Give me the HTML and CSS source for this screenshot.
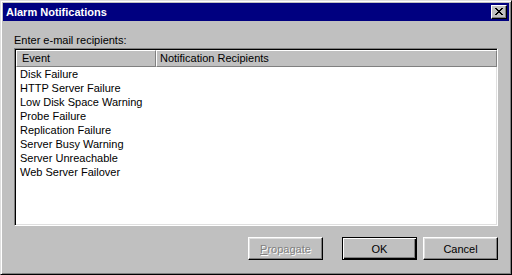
FILE: index.html
```html
<!DOCTYPE html>
<html lang="en">
<head>
  <meta charset="UTF-8">
  <title>Alarm Notifications</title>
  <link rel="stylesheet" href="styles.css">
</head>
<body>
  <div class="window">
    <div class="titlebar">
      <span class="title">Alarm Notifications</span>
      <button class="close-btn" aria-label="Close">
        <svg width="8" height="7" viewBox="0 0 8 7">
          <path d="M0 0h2v1h-2zM6 0h2v1h-2zM1 1h2v1h-2zM5 1h2v1h-2zM2 2h4v1h-4zM3 3h2v1h-2zM2 4h4v1h-4zM1 5h2v1h-2zM5 5h2v1h-2zM0 6h2v1h-2zM6 6h2v1h-2z" fill="#000"/>
        </svg>
      </button>
    </div>

    <div class="content">
      <div class="label">Enter e-mail recipients:</div>

      <div class="listview">
        <div class="header">
          <div class="col col-event">Event</div>
          <div class="col col-recip">Notification Recipients</div>
        </div>
        <ul class="rows">
          <li>Disk Failure</li>
          <li>HTTP Server Failure</li>
          <li>Low Disk Space Warning</li>
          <li>Probe Failure</li>
          <li>Replication Failure</li>
          <li>Server Busy Warning</li>
          <li>Server Unreachable</li>
          <li>Web Server Failover</li>
        </ul>
      </div>

      <div class="buttons">
        <button class="btn disabled"><u>P</u>ropagate</button>
        <button class="btn default">OK</button>
        <button class="btn">Cancel</button>
      </div>
    </div>
  </div>
</body>
</html>
```

FILE: styles.css
```css
body {
  margin: 0;
  font-family: "Liberation Sans", Arial, sans-serif;
  font-size: 11px;
  background: #c0c0c0;
}
.window {
  width: 512px;
  height: 275px;
  box-sizing: border-box;
  background: #c0c0c0;
  border-top: 1px solid #dfdfdf;
  border-left: 1px solid #dfdfdf;
  border-right: 1px solid #000;
  border-bottom: 1px solid #000;
  box-shadow: inset 1px 1px #fff, inset -1px -1px #808080;
  padding: 2px;
  display: flex;
  flex-direction: column;
}
.titlebar {
  height: 18px;
  background: #000080;
  color: #fff;
  display: flex;
  align-items: center;
  justify-content: space-between;
  padding: 0 2px 0 3px;
}
.title {
  font-weight: bold;
  font-size: 11px;
}
.close-btn {
  width: 16px;
  height: 14px;
  padding: 0;
  background: #c0c0c0;
  border-top: 1px solid #fff;
  border-left: 1px solid #fff;
  border-right: 1px solid #000;
  border-bottom: 1px solid #000;
  box-shadow: inset -1px -1px #808080;
  display: flex;
  align-items: center;
  justify-content: center;
}
.close-btn svg {
  display: block;
  margin: 0 0 1px 0;
}
.content {
  flex: 1;
  padding: 0 11px;
  display: flex;
  flex-direction: column;
}
.label {
  margin-top: 13px;
  line-height: 13px;
  margin-bottom: 1px;
  color: #000;
}
.listview {
  height: 178px;
  box-sizing: border-box;
  background: #fff;
  border-top: 1px solid #808080;
  border-left: 1px solid #808080;
  border-right: 1px solid #fff;
  border-bottom: 1px solid #fff;
  box-shadow: inset 1px 1px #000, inset -1px -1px #dfdfdf;
  padding: 1px;
}
.header {
  display: flex;
  height: 17px;
  background: #c0c0c0;
  width: 481px;
}
.col {
  box-sizing: border-box;
  height: 17px;
  line-height: 15px;
  border-top: 1px solid #fff;
  border-left: 1px solid #fff;
  border-right: 1px solid #808080;
  border-bottom: 1px solid #808080;
  white-space: nowrap;
}
.col-event {
  width: 140px;
  padding-left: 5px;
}
.col-recip {
  flex: 1;
  padding-left: 3px;
}
.rows {
  list-style: none;
  margin: 0;
  padding: 0;
}
.rows li {
  line-height: 14px;
  padding-left: 4px;
}
.buttons {
  display: flex;
  justify-content: flex-end;
  margin-top: 11px;
}
.btn {
  width: 75px;
  height: 23px;
  box-sizing: border-box;
  padding: 0;
  font-family: "Liberation Sans", Arial, sans-serif;
  font-size: 11px;
  color: #000;
  background: #c0c0c0;
  border-top: 1px solid #fff;
  border-left: 1px solid #fff;
  border-right: 1px solid #000;
  border-bottom: 1px solid #000;
  box-shadow: inset -1px -1px #808080, inset 1px 1px #dfdfdf;
  margin-left: 6px;
}
.btn.disabled {
  color: #808080;
  text-shadow: 1px 1px #fff;
  margin-right: 13px;
}
.btn.default {
  border: 1px solid #000;
  box-shadow: inset 1px 1px #fff, inset -1px -1px #000, inset -2px -2px #808080;
}
```
